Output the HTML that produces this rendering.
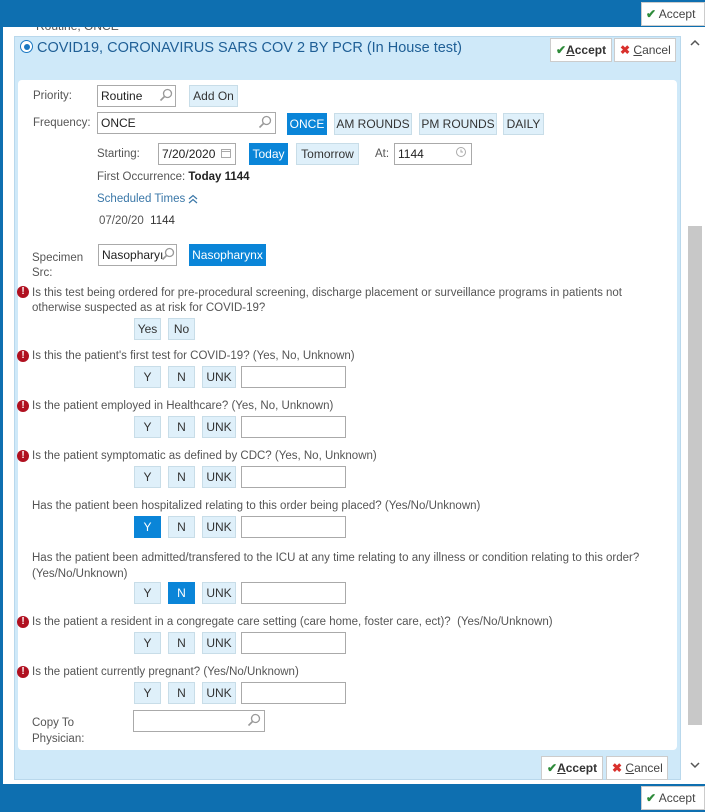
<!DOCTYPE html>
<html><head><meta charset="utf-8"><style>
*{box-sizing:border-box;margin:0;padding:0}
body{width:705px;height:812px;position:relative;overflow:hidden;background:#fff;font-family:"Liberation Sans",sans-serif;font-size:11.5px;color:#555}
.a{position:absolute;white-space:nowrap}
.btn{position:absolute;background:#dff0fa;border:1px solid #c8dde8;color:#333;text-align:center;font-size:12px;line-height:20px;height:22px}
.sel{background:#0a85d8;color:#fff;border-color:#0a85d8}
.inp{position:absolute;background:#fff;border:1px solid #aaa;height:22px;font-size:12px;color:#222;line-height:20px;padding-left:3px}
.ex{position:absolute;width:12px;height:12px;border-radius:6px;background:#b01020;color:#fff;font-size:10px;font-weight:bold;line-height:12px;text-align:center}
.q{position:absolute;left:32px;color:#555;white-space:nowrap}
.wb{position:absolute;background:#fff;border:1px solid #ccc;font-size:12px;color:#444;line-height:22px;height:24px}
.chk{color:#2e8b3a;font-weight:bold}
.x{color:#d9302c;font-weight:bold}
.mag{position:absolute;width:14px;height:14px}
</style></head><body>
<div class="a" style="left:36px;top:19px;color:#555;font-size:12px">Routine, ONCE</div>
<div class="a" style="left:0;top:0;width:705px;height:27px;background:#0e6fb0"></div>
<div class="wb" style="left:641px;top:2px;width:64px;padding-left:4px"><span class="chk">✔</span> Accept</div>
<div class="a" style="left:0;top:27px;width:3px;height:757px;background:#0e6fb0"></div>
<!-- panel -->
<div class="a" style="left:14px;top:36px;width:667px;height:744px;background:#cfe9f9;border:1px solid #b9d8ec"></div>
<div class="a" style="left:18px;top:80px;width:659px;height:670px;background:#fff;border-radius:4px"></div>
<div class="a" style="left:20px;top:40px;width:13px;height:13px;border-radius:7px;border:1.5px solid #1b78c2;background:#fff"></div>
<div class="a" style="left:23.5px;top:43.5px;width:6px;height:6px;border-radius:3px;background:#1b78c2"></div>
<div class="a" style="left:37px;top:40px;font-size:14.5px;color:#1f5f96">COVID19, CORONAVIRUS SARS COV 2 BY PCR (In House test)</div>
<div class="wb" style="left:550px;top:38px;width:62px;padding-left:5px;font-weight:bold;color:#333"><span class="chk">✔</span><u>A</u>ccept</div>
<div class="wb" style="left:614px;top:38px;width:62px;padding-left:5px"><span class="x">✖</span> <u>C</u>ancel</div>
<!-- scrollbar -->
<svg class="a" style="left:689px;top:38px" width="12" height="10"><path d="M2 7 L6 3 L10 7" stroke="#555" stroke-width="1.5" fill="none"/></svg>
<div class="a" style="left:688px;top:226px;width:14px;height:499px;background:#c8c8c8"></div>
<svg class="a" style="left:689px;top:760px" width="12" height="10"><path d="M2 3 L6 7 L10 3" stroke="#555" stroke-width="1.5" fill="none"/></svg>
<!-- priority -->
<div class="a" style="left:33px;top:90px">Priority:</div>
<div class="inp" style="left:97px;top:85px;width:79px">Routine</div>
<svg class="mag" style="left:159px;top:88px" viewBox="0 0 14 14"><circle cx="8.5" cy="5.5" r="4" stroke="#999" stroke-width="1.3" fill="none"/><path d="M5.5 8.5 L1.5 12.5" stroke="#999" stroke-width="1.6"/></svg>
<div class="btn" style="left:189px;top:85px;width:49px">Add On</div>
<div class="a" style="left:33px;top:117px">Frequency:</div>
<div class="inp" style="left:97px;top:112px;width:179px">ONCE</div>
<svg class="mag" style="left:258px;top:115px" viewBox="0 0 14 14"><circle cx="8.5" cy="5.5" r="4" stroke="#999" stroke-width="1.3" fill="none"/><path d="M5.5 8.5 L1.5 12.5" stroke="#999" stroke-width="1.6"/></svg>
<div class="btn sel" style="left:287px;top:113px;width:40px">ONCE</div>
<div class="btn" style="left:334px;top:113px;width:78px">AM ROUNDS</div>
<div class="btn" style="left:419px;top:113px;width:78px">PM ROUNDS</div>
<div class="btn" style="left:503px;top:113px;width:41px">DAILY</div>
<div class="a" style="left:97px;top:148px">Starting:</div>
<div class="inp" style="left:158px;top:143px;width:78px">7/20/2020</div>
<svg class="a" style="left:220px;top:147px" width="12" height="12"><rect x="1.5" y="2.5" width="9" height="8" stroke="#aaa" fill="none"/><path d="M1.5 4.5 H10.5" stroke="#aaa"/></svg>
<div class="btn sel" style="left:249px;top:143px;width:39px">Today</div>
<div class="btn" style="left:296px;top:143px;width:63px">Tomorrow</div>
<div class="a" style="left:375px;top:148px">At:</div>
<div class="inp" style="left:394px;top:143px;width:78px">1144</div>
<svg class="a" style="left:455px;top:146px" width="12" height="12"><circle cx="6" cy="6" r="4.5" stroke="#aaa" fill="none"/><path d="M6 3.5 V6 H8" stroke="#aaa" fill="none"/></svg>
<div class="a" style="left:97px;top:171px">First Occurrence: <b style="color:#222">Today 1144</b></div>
<div class="a" style="left:97px;top:193px;color:#3a77a8">Scheduled Times</div>
<svg class="a" style="left:188px;top:194px" width="10" height="10"><path d="M1 5 L5 1.5 L9 5 M1 9 L5 5.5 L9 9" stroke="#3a77a8" stroke-width="1.2" fill="none"/></svg>
<div class="a" style="left:99px;top:215px">07/20/20 &nbsp;<span style="color:#333">1144</span></div>
<div class="a" style="left:32px;top:251px;line-height:15px">Specimen<br>Src:</div>
<div class="inp" style="left:98px;top:244px;width:79px;overflow:hidden">Nasopharyı</div>
<svg class="mag" style="left:161px;top:247px" viewBox="0 0 14 14"><circle cx="8.5" cy="5.5" r="4" stroke="#999" stroke-width="1.3" fill="none"/><path d="M5.5 8.5 L1.5 12.5" stroke="#999" stroke-width="1.6"/></svg>
<div class="btn sel" style="left:189px;top:244px;width:77px">Nasopharynx</div>
<!-- q1 -->
<div class="ex" style="left:17px;top:286px">!</div>
<div class="q" style="top:286px;line-height:15px">Is this test being ordered for pre-procedural screening, discharge placement or surveillance programs in patients not<br>otherwise suspected as at risk for COVID-19?</div>
<div class="btn" style="left:134px;top:318px;width:27px">Yes</div>
<div class="btn" style="left:168px;top:318px;width:27px">No</div>

<div class="ex" style="left:17px;top:350px">!</div><div class="q" style="top:350px">Is this the patient's first test for COVID-19? (Yes, No, Unknown)</div>
<div class="btn" style="left:134px;top:366px;width:27px">Y</div><div class="btn" style="left:168px;top:366px;width:27px">N</div><div class="btn" style="left:202px;top:366px;width:34px">UNK</div><div class="inp" style="left:241px;top:366px;width:105px"></div>

<div class="ex" style="left:17px;top:400px">!</div><div class="q" style="top:400px">Is the patient employed in Healthcare? (Yes, No, Unknown)</div>
<div class="btn" style="left:134px;top:416px;width:27px">Y</div><div class="btn" style="left:168px;top:416px;width:27px">N</div><div class="btn" style="left:202px;top:416px;width:34px">UNK</div><div class="inp" style="left:241px;top:416px;width:105px"></div>

<div class="ex" style="left:17px;top:450px">!</div><div class="q" style="top:450px">Is the patient symptomatic as defined by CDC? (Yes, No, Unknown)</div>
<div class="btn" style="left:134px;top:466px;width:27px">Y</div><div class="btn" style="left:168px;top:466px;width:27px">N</div><div class="btn" style="left:202px;top:466px;width:34px">UNK</div><div class="inp" style="left:241px;top:466px;width:105px"></div>

<div class="q" style="top:500px">Has the patient been hospitalized relating to this order being placed? (Yes/No/Unknown)</div>
<div class="btn sel" style="left:134px;top:516px;width:27px">Y</div><div class="btn" style="left:168px;top:516px;width:27px">N</div><div class="btn" style="left:202px;top:516px;width:34px">UNK</div><div class="inp" style="left:241px;top:516px;width:105px"></div>

<div class="q" style="top:550px;line-height:16px">Has the patient been admitted/transfered to the ICU at any time relating to any illness or condition relating to this order?<br>(Yes/No/Unknown)</div>
<div class="btn" style="left:134px;top:582px;width:27px">Y</div><div class="btn sel" style="left:168px;top:582px;width:27px">N</div><div class="btn" style="left:202px;top:582px;width:34px">UNK</div><div class="inp" style="left:241px;top:582px;width:105px"></div>

<div class="ex" style="left:17px;top:616px">!</div><div class="q" style="top:616px">Is the patient a resident in a congregate care setting (care home, foster care, ect)?&nbsp; (Yes/No/Unknown)</div>
<div class="btn" style="left:134px;top:632px;width:27px">Y</div><div class="btn" style="left:168px;top:632px;width:27px">N</div><div class="btn" style="left:202px;top:632px;width:34px">UNK</div><div class="inp" style="left:241px;top:632px;width:105px"></div>

<div class="ex" style="left:17px;top:666px">!</div><div class="q" style="top:666px">Is the patient currently pregnant? (Yes/No/Unknown)</div>
<div class="btn" style="left:134px;top:682px;width:27px">Y</div><div class="btn" style="left:168px;top:682px;width:27px">N</div><div class="btn" style="left:202px;top:682px;width:34px">UNK</div><div class="inp" style="left:241px;top:682px;width:105px"></div>

<div class="a" style="left:32px;top:715px;line-height:16px">Copy To<br>Physician:</div>
<div class="inp" style="left:133px;top:710px;width:132px"></div>
<svg class="mag" style="left:247px;top:713px" viewBox="0 0 14 14"><circle cx="8.5" cy="5.5" r="4" stroke="#999" stroke-width="1.3" fill="none"/><path d="M5.5 8.5 L1.5 12.5" stroke="#999" stroke-width="1.6"/></svg>

<div class="wb" style="left:541px;top:756px;width:62px;padding-left:5px;font-weight:bold;color:#333"><span class="chk">✔</span><u>A</u>ccept</div>
<div class="wb" style="left:606px;top:756px;width:62px;padding-left:5px"><span class="x">✖</span> <u>C</u>ancel</div>

<div class="a" style="left:0;top:784px;width:705px;height:28px;background:#0e6fb0"></div>
<div class="wb" style="left:641px;top:786px;width:64px;padding-left:4px"><span class="chk">✔</span> Accept</div>
</body></html>
